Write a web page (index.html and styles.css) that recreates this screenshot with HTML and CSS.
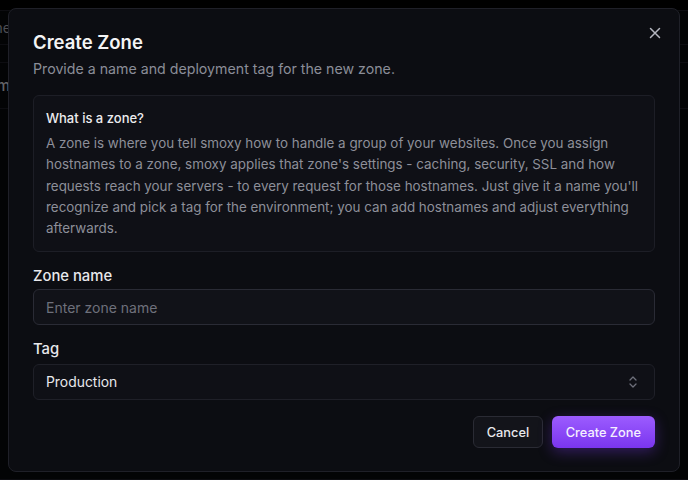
FILE: index.html
```html
<!DOCTYPE html>
<html lang="en">
<head>
<meta charset="utf-8">
<title>Create Zone</title>
<link rel="stylesheet" href="styles.css">
</head>
<body>
<div class="page">
  <div class="bg-panel">
    <div class="bg-row bg-search">Search zone name</div>
    <div class="bg-row bg-gap"></div>
    <div class="bg-row bg-item">Platform</div>
    <div class="bg-row bg-rest"></div>
  </div>
  <div class="overlay"></div>
  <div class="modal" role="dialog">
    <button class="close" aria-label="Close">
      <svg width="16" height="16" viewBox="0 0 16 16" fill="none" stroke="currentColor" stroke-width="1.5" stroke-linecap="round"><path d="M3.5 3.5l9 9M12.5 3.5l-9 9"/></svg>
    </button>
    <h2 class="title">Create Zone</h2>
    <p class="subtitle">Provide a name and deployment tag for the new zone.</p>
    <div class="info">
      <h3 class="info-title">What is a zone?</h3>
      <p class="info-text">A zone is where you tell smoxy how to handle a group of your websites. Once you assign hostnames to a zone, smoxy applies that zone's settings - caching, security, SSL and how requests reach your servers - to every request for those hostnames. Just give it a name you'll recognize and pick a tag for the environment; you can add hostnames and adjust everything afterwards.</p>
    </div>
    <div class="field field-name">
      <label class="label">Zone name</label>
      <div class="input placeholder">Enter zone name</div>
    </div>
    <div class="field field-tag">
      <label class="label">Tag</label>
      <div class="input select">
        <span>Production</span>
        <svg width="12" height="14" viewBox="0 0 12 14" fill="none" stroke="currentColor" stroke-width="1.3" stroke-linecap="round" stroke-linejoin="round"><path d="M3 5l3-3 3 3M3 9l3 3 3-3"/></svg>
      </div>
    </div>
    <div class="actions">
      <button class="btn btn-secondary">Cancel</button>
      <button class="btn btn-primary">Create Zone</button>
    </div>
  </div>
</div>
</body>
</html>
```
FILE: styles.css
```css
* { box-sizing: border-box; }
html, body { margin: 0; padding: 0; }
body {
  width: 688px;
  height: 480px;
  overflow: hidden;
  background: #000;
  font-family: Inter, "Noto Sans", sans-serif;
  color: #f4f4f5;
}
.page {
  position: relative;
  width: 688px;
  height: 480px;
  padding: 8px;
}
.bg-panel {
  position: absolute;
  left: -120px;
  top: 10px;
  width: 900px;
  height: 470px;
  border: 1px solid #1a1b22;
  background: #07080b;
  display: flex;
  flex-direction: column;
}
.bg-row {
  border-bottom: 1px solid #1a1b22;
  font-size: 14px;
  color: #8b8d98;
  display: flex;
  align-items: center;
  justify-content: flex-end;
  padding-right: 768px;
  white-space: nowrap;
}
.bg-search { height: 34px; color: #9a9ca6; }
.bg-gap { height: 18px; }
.bg-item { height: 46px; color: #c5c7cf; font-weight: 500; font-size: 15px; padding-right: 769px; }
.bg-rest { flex: 1; border-bottom: none; }
.overlay {
  position: absolute;
  inset: 0;
  background: rgba(0,0,0,0.5);
}
.modal {
  position: relative;
  width: 672px;
  height: 464px;
  background: #0c0d12;
  border: 1px solid #1f2028;
  border-radius: 8px;
  padding: 20px 24px 23px;
  display: flex;
  flex-direction: column;
}
.close {
  position: absolute;
  top: 12px;
  right: 12px;
  width: 24px;
  height: 24px;
  padding: 0;
  border: 0;
  background: none;
  color: #b4b6bf;
  display: flex;
  align-items: center;
  justify-content: center;
}
.title {
  margin: 0;
  font-size: 18.5px;
  line-height: 26px;
  font-weight: 600;
  color: #f4f4f5;
}
.subtitle {
  margin: 4px 0 0;
  font-size: 14.2px;
  line-height: 20px;
  color: #8b8d98;
}
.info {
  margin-top: 16px;
  background: #0f1016;
  border: 1px solid #1d1e26;
  border-radius: 6px;
  padding: 12px 12px 12px;
}
.info-title {
  margin: 0;
  font-size: 13px;
  line-height: 21px;
  font-weight: 500;
  color: #ececef;
}
.info-text {
  margin: 4px 0 0;
  font-size: 13.4px;
  line-height: 21.3px;
  color: #8d8f99;
}
.field {
  display: flex;
  flex-direction: column;
}
.field-name { margin-top: 14px; }
.field-tag { margin-top: 14px; }
.label {
  font-size: 14.8px;
  line-height: 20px;
  font-weight: 500;
  color: #e8e8ec;
  margin-bottom: 4px;
}
.field-name .label { margin-bottom: 3px; }
.field-tag .label { margin-bottom: 5px; }
.input {
  height: 36px;
  border: 1px solid #2a2b35;
  border-radius: 6px;
  background: #111218;
  padding: 0 12px;
  display: flex;
  align-items: center;
  font-size: 14px;
  color: #e8e8ec;
}
.placeholder { color: #6e707b; }
.select {
  justify-content: space-between;
  background: #0f1016;
  border-color: #1f2028;
  font-size: 13.9px;
}
.select svg { color: #6e707b; margin-right: 3px; }
.actions {
  margin-top: auto;
  display: flex;
  justify-content: flex-end;
  gap: 9px;
}
.btn {
  height: 32px;
  border-radius: 6px;
  font-family: inherit;
  font-size: 12.8px;
  font-weight: 500;
  padding: 0 14px;
}
.btn-secondary {
  background: #13141a;
  border: 1px solid #2a2b34;
  color: #e8e8ec;
  padding: 0 12.5px;
}
.btn-primary {
  background: linear-gradient(180deg, #9c5cff 0%, #7a35ef 100%);
  border: 0;
  color: #f5f0ff;
  box-shadow: 0 4px 14px rgba(124, 58, 237, 0.35);
}
```
